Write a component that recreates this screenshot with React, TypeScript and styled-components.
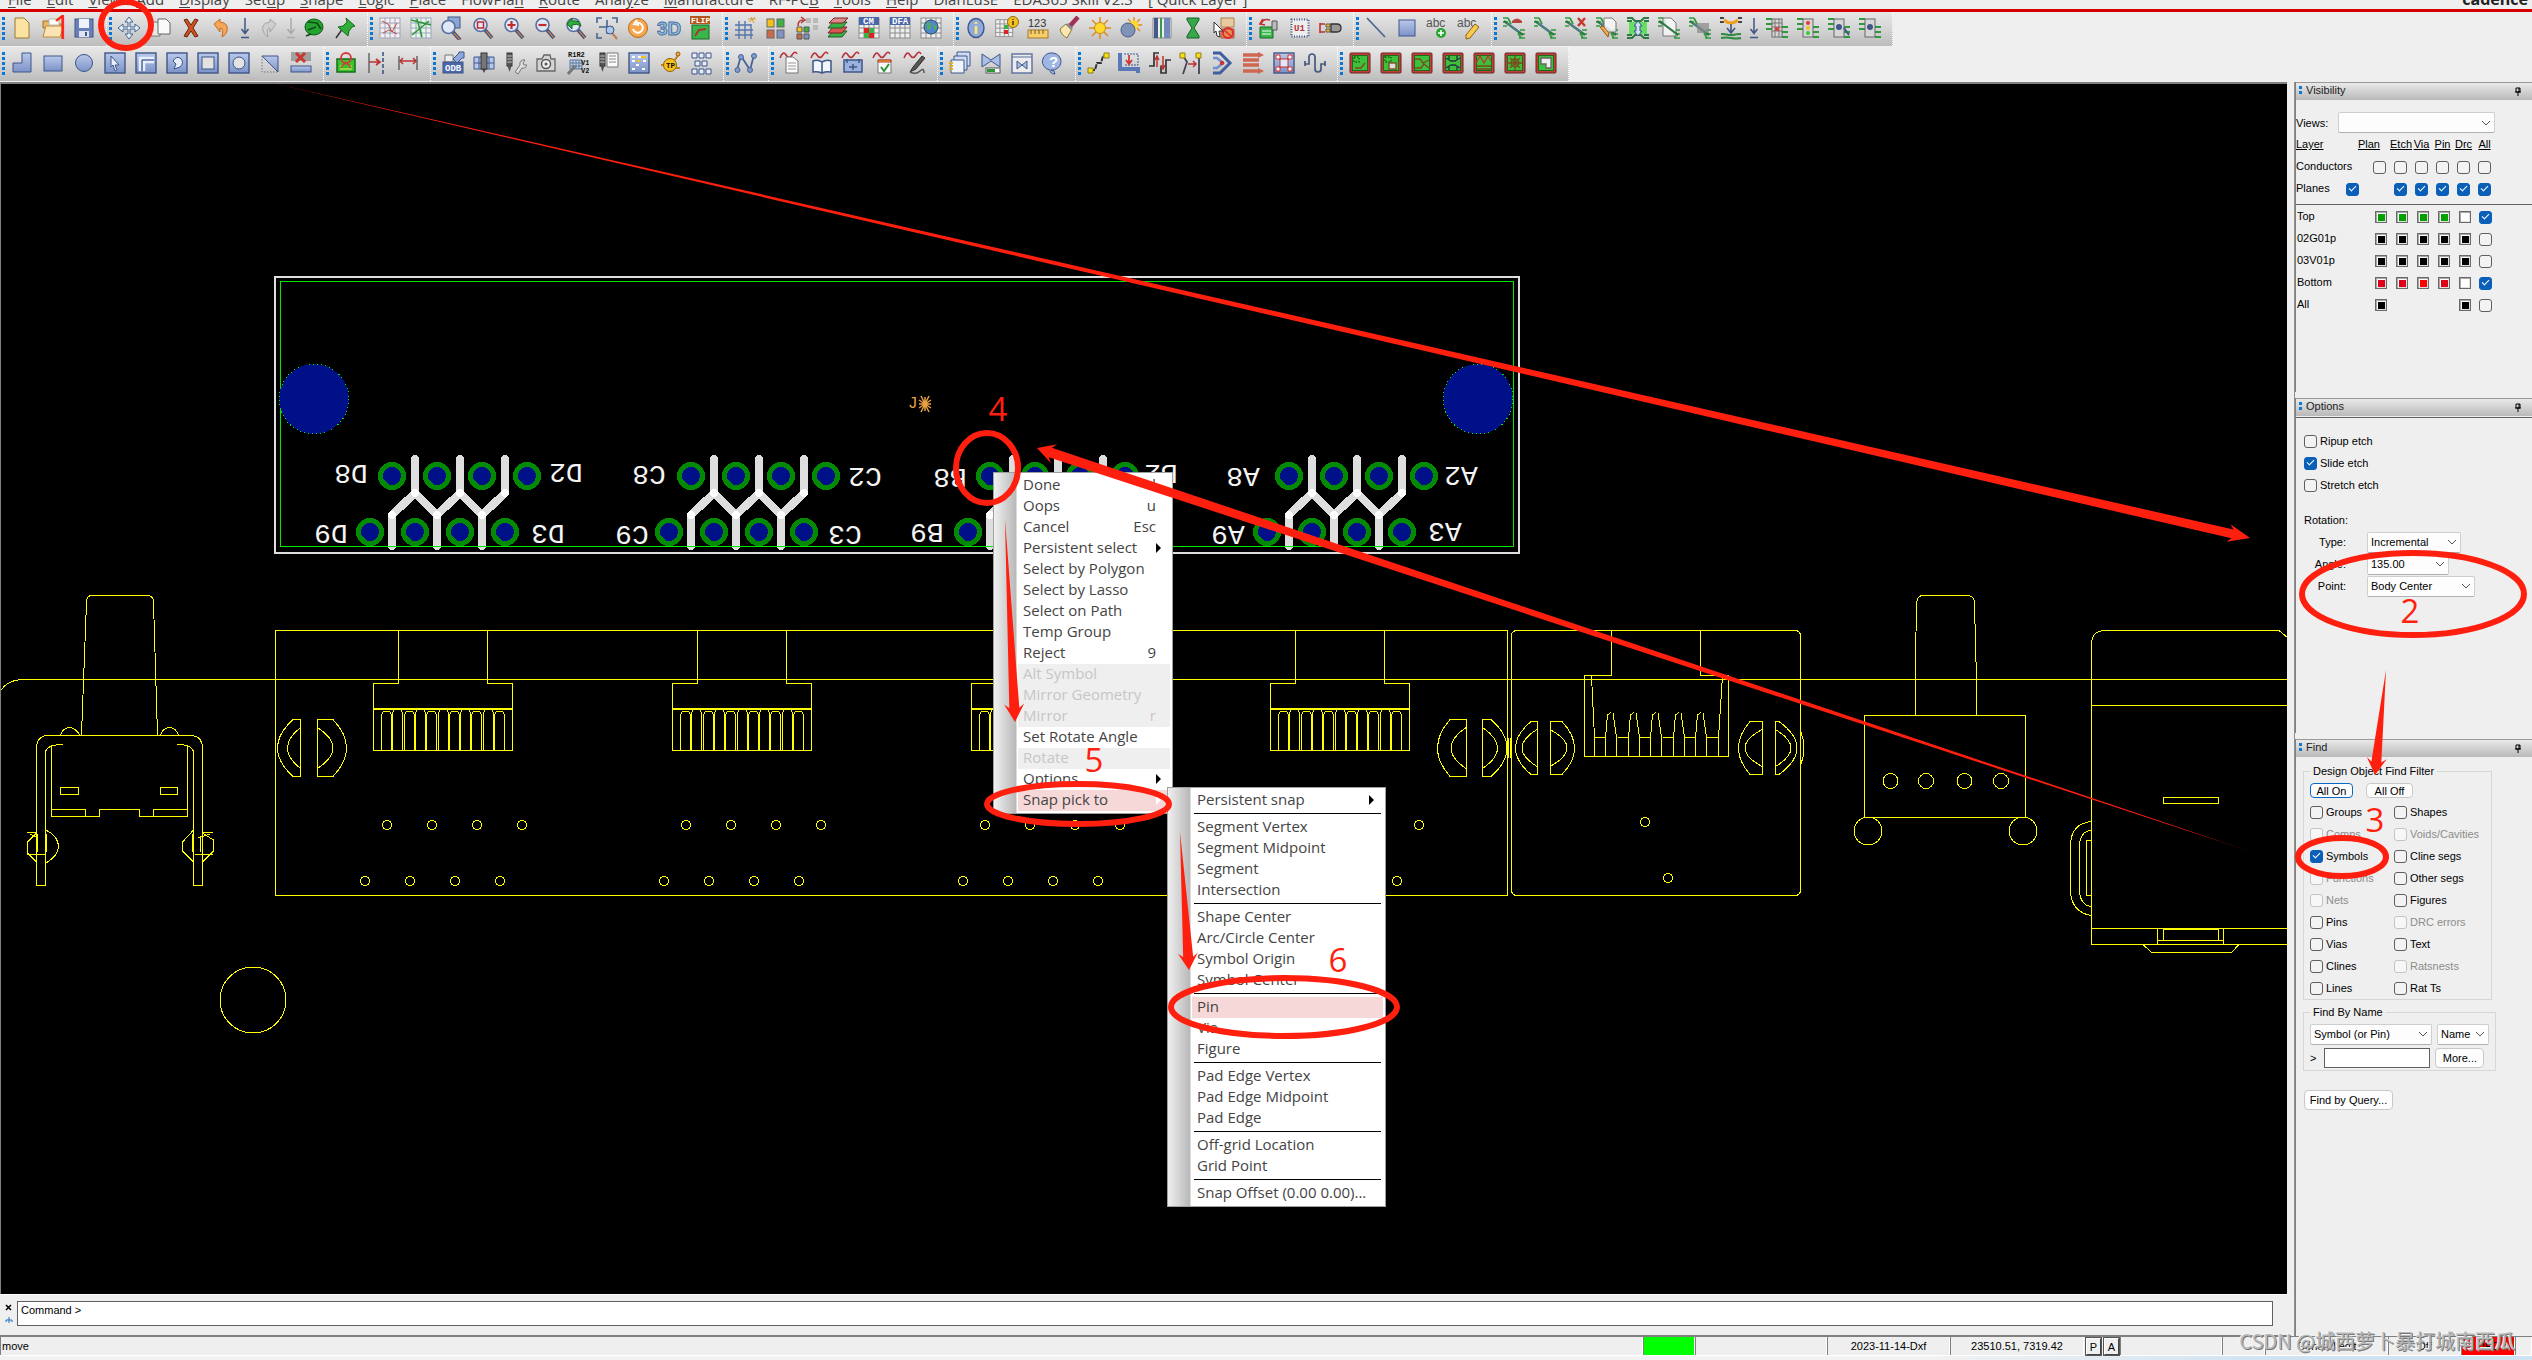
import React, { ReactNode } from "react";
import styled, { createGlobalStyle, css } from "styled-components";

const ui = `"Open Sans", "Noto Sans", sans-serif`;
const plain = `"Liberation Sans", Arial, sans-serif`;
const red = "#ff1f0f";

const GlobalStyle = createGlobalStyle`
  * { box-sizing: border-box; }
  body { margin: 0; background: #efefef; font-family: ${plain}; font-size: 11px; color: #000; }
  button, input, select { font: inherit; color: inherit; margin: 0; }
`;

/* ---------- icons ---------- */

const navy = "#3f5688";
const Sheet = ({ x = 5, y = 2, fill = "#fbe3a4", stroke = "#9a7b2e" }) => (
  <path d={`M${x} ${y}h9l5 5v15h-14z`} fill={fill} stroke={stroke} />
);
const Lens = ({ children }: { children?: ReactNode }) => (
  <g>
    <path d="M14 14l7 8" stroke="#3b4f7d" strokeWidth="3.6" />
    <path d="M15 15l6 7" stroke="#c77a4a" strokeWidth="1.4" />
    <circle cx="9.500" cy="9" r="6.500" fill="#dfe8f8" stroke="#5a6f9f" strokeWidth="1.600" />
    {children}
  </g>
);
const Grid = ({ c = "#8a8a8a", bg = "#eee" }) => (
  <g>
    <rect x="2" y="2" width="20" height="20" fill={bg} stroke={c} />
    <path d="M2 7h20M2 12h20M2 17h20M7 2v20M12 2v20M17 2v20" stroke={c} />
  </g>
);
const Tile = ({ children }: { children?: ReactNode }) => (
  <g>
    <rect x="2" y="2" width="20" height="20" fill="url(#blue)" stroke={navy} strokeWidth="1.400" />
    {children}
  </g>
);
const Board = ({ children }: { children?: ReactNode }) => (
  <g>
    <rect x="2" y="2" width="20" height="20" rx="1" fill="#c2403c" stroke="#6f2020" />
    <rect x="4.500" y="4.500" width="15" height="15" fill="#3fbf3a" stroke="#1c6b1c" />
    <g fill="none" stroke="#7a4a20" strokeWidth="1.300">{children}</g>
  </g>
);
const Wave = ({ children }: { children?: ReactNode }) => (
  <g>
    <path d="M1 7q3-8 6-3t6 0t5-1" fill="none" stroke="#b5303a" strokeWidth="1.500" />
    {children}
  </g>
);
const Net = ({ children }: { children?: ReactNode }) => (
  <g>
    <path d="M1 2h5M1 6h5M1 10h4M18 14h5M18 18h5M17 22h6M6 2l3 6M16 17l3 5" stroke="#2f9a3c" strokeWidth="1.700" />
    <path d="M2 5l19 14" stroke="#2d7a40" strokeWidth="2.200" />
    <path d="M5 7l12 9" stroke="#5d78b0" strokeWidth="1.100" />
    {children}
  </g>
);
const Chip = ({ children }: { children?: ReactNode }) => (
  <g>
    <path d="M1 3h6M1 8h6M1 13h6M17 11h6M17 16h6M17 21h6" stroke="#2f9a3c" strokeWidth="1.900" />
    <rect x="7" y="3" width="10" height="18" fill="#d6d6d6" stroke="#666" />
    {children}
  </g>
);
const DownArrow = ({ c = navy }) => (
  <path d="M6 2v15M2.500 13L6 17.500L9.500 13M2 21.500h8" fill="none" stroke={c} strokeWidth="1.500" />
);
const Bolt = () => (
  <g>
    <rect x="4" y="2" width="5" height="13" fill="#5a5a5a" stroke="#333" />
    <path d="M4 5h5M4 8h5M4 11h5" stroke="#bbb" />
    <path d="M4.500 15l2 6 2-6" fill="#555" />
  </g>
);
const Wrench = () => (
  <path d="M12 21l5-7a4 4 0 0 1 5-5l-2 3 1 2h3a4 4 0 0 1-5 3l-4 6z" fill="#ddd" stroke="#777" />
);

const icons: Record<string, ReactNode> = {
  New: <Sheet />,
  Open: <><path d="M2 5h8l2 3h8v4H2z" fill="#e7b768" stroke="#a66f22" /><path d="M5 10h18l-4 11H2z" fill="#fbe3b4" stroke="#c58a3a" /><path d="M8 3h10v6H8z" fill="#fff" stroke="#b7b7b7" /></>,
  Save: <><rect x="3" y="3" width="18" height="18" fill="#6a7fb8" stroke={navy} /><rect x="7" y="3" width="10" height="9" fill="#eef2fa" /><rect x="7" y="15" width="10" height="6" fill="#dfe4ee" /><rect x="13" y="16" width="2" height="4" fill={navy} /></>,
  Move: <path d="M12 1l4 5h-3v5h5V8l5 4-5 4v-3h-5v5h3l-4 5-4-5h3v-5H6v3l-5-4 5-4v3h5V6H8z" fill="#e6f0fa" stroke="#45668f" />,
  Copy: <><path d="M3 6h9v14H3z" fill="#e8e8e8" stroke="#777" /><path d="M10 3h8l4 4v11H10z" fill="#fafafa" stroke="#666" /></>,
  Delete: <path d="M5 4l3-1 4 6 4-6 3 1-5 8 5 8-3 1-4-6-4 6-3-1 5-8z" fill="#d4511e" stroke="#5a2410" />,
  Undo: <path d="M4 8l6-5v3q9 1 7 9-1 4-5 6 2-9-2-9v4z" fill="#f4a75a" stroke="#c06f24" />,
  Apply: <DownArrow />,
  Redo: <path d="M20 8l-6-5v3q-9 1-7 9 1 4 5 6-2-9 2-9v4z" fill="#cfcfcf" stroke="#a5a5a5" />,
  "Apply redo": <DownArrow c="#aaa" />,
  Globe: <><ellipse cx="12" cy="11" rx="9" ry="8" fill="#24a32f" stroke="#0e5a18" /><path d="M6 6l9 1 4 6M6 14l8-3M4 20l5-2" stroke="#0b4d14" strokeWidth="1.600" fill="none" /></>,
  Pin: <><path d="M10 12L3 22" stroke="#333" strokeWidth="1.500" /><path d="M13 2l9 8-3 1-3 4-1 5-10-9 5-1 4-4z" fill="#2fae39" stroke="#126b1b" /></>,
  Unrats: <><Grid bg="#f6eeee" c="#9aa6bd" /><path d="M4 5l6 3 4 8 5-9M5 17l6-3 8 4" stroke="#b34a4a" fill="none" /></>,
  Rats: <><Grid bg="#eaf6ea" c="#9aa6bd" /><path d="M2 4l20 5M3 19L20 5M8 3l5 18" stroke="#2c9638" strokeWidth="1.600" /></>,
  "Zoom by points": <><rect x="8" y="1" width="12" height="11" fill="#8ea6d6" stroke={navy} /><g transform="translate(-1 2)"><Lens /></g></>,
  "Zoom fit": <Lens><rect x="6.500" y="6" width="6" height="6" fill="none" stroke="#c02a2a" strokeWidth="1.500" /></Lens>,
  "Zoom in": <Lens><path d="M9.500 5v8M5.500 9h8" stroke="#c02a2a" strokeWidth="2.200" /></Lens>,
  "Zoom out": <Lens><path d="M5.500 9h8" stroke="#c02a2a" strokeWidth="2.200" /></Lens>,
  "Zoom previous": <Lens><path d="M3 8l5-6v3q8-1 9 5-4-3-9-1v4z" fill="#2fae39" stroke="#126b1b" /></Lens>,
  "Zoom selection": <><path d="M2 7V2h5M17 2h5v5M2 17v5h5M12 4v14M4 11h14" fill="none" stroke="#45668f" strokeWidth="1.600" /><path d="M17 17l5 6" stroke="#c77a4a" strokeWidth="2" /><circle cx="15" cy="14" r="4" fill="#a9c8ea" stroke={navy} /></>,
  Redraw: <><circle cx="12" cy="12" r="9.500" fill="#f6a64c" stroke="#b56a1c" /><path d="M7 13a5 5 0 1 0 3-6M11 4L8 8l5 1" fill="none" stroke="#fff" strokeWidth="2" /></>,
  "3D": <text x="0" y="19" fontFamily="Liberation Sans" fontWeight="700" fontSize="19" fill="#9cc3e6" stroke="#47719f">3D</text>,
  Flip: <><rect x="2" y="0" width="20" height="8" fill="#b5561a" /><text x="3" y="7" fontFamily="Liberation Mono" fontWeight="700" fontSize="8" fill="#fff">FLIP</text><rect x="4" y="9" width="17" height="14" fill="#39b54a" stroke="#176b20" /><path d="M7 20l4-6 7-1" stroke="#a33" strokeWidth="2" fill="none" /></>,
  "Grid toggle": <><path d="M6 5v18M12 5v18M18 8v15M2 9h16M2 14h18M2 19h18" stroke="#5577aa" strokeWidth="1.400" /><path d="M16 6l6-5M18 1l3 6M15 3h8" stroke="#d79a3a" /></>,
  Color: <><rect x="3" y="3" width="7" height="8" fill="#f6c21a" stroke="#666" /><rect x="13" y="3" width="7" height="8" fill="#3bb044" stroke="#666" /><rect x="3" y="14" width="7" height="8" fill="#c96a4a" stroke="#666" /><rect x="13" y="14" width="7" height="8" fill="#7f93c4" stroke="#666" /></>,
  "Color swap": <><path d="M11 2h5v5h-5zM18 2h5v5h-5zM18 9h5v5h-5z" fill="#b9b9b9" /><path d="M3 10q0-6 5-6M6 1l4 3-4 3" stroke="#b33" fill="none" strokeWidth="1.500" /><path d="M2 11h5v5H2z" fill="#f6c21a" stroke="#555" /><path d="M9 11h5v5H9z" fill="#3bb044" stroke="#555" /><path d="M2 18h5v5H2z" fill="#c96a4a" stroke="#555" /><path d="M9 18h5v5H9z" fill="#7f93c4" stroke="#555" /></>,
  Layers: <><path d="M7 15h14l-5 6H2z" fill="#3bb044" stroke="#1c5d22" /><path d="M7 11h14l-5 6H2z" fill="#d55" stroke="#722" /><path d="M7 6h14l-5 6H2z" fill="#3bb044" stroke="#1c5d22" /><path d="M8 2h14l-5 5H3z" fill="#d88" stroke="#722" /></>,
  "Constraint manager": <><Grid /><rect x="2" y="1" width="20" height="8" fill="#4a68a8" /><text x="6" y="8" fontFamily="Liberation Mono" fontWeight="700" fontSize="9" fill="#fff">CM</text><path d="M7 12h5v5H7zM12 17h5v5h-5z" fill="#d22" /><path d="M12 12h5v5h-5zM7 17h5v5H7z" fill="#3bb044" /></>,
  DFA: <><Grid /><rect x="2" y="1" width="20" height="8" fill="#4a68a8" /><text x="4" y="8" fontFamily="Liberation Mono" fontWeight="700" fontSize="9" fill="#fff">DFA</text></>,
  World: <><Grid /><circle cx="12" cy="11" r="7" fill="#4f87c7" stroke="#24486f" /><path d="M8 6q4 0 4 4t-4 3zM14 9l4 1-2 5z" fill="#4fae55" /></>,
  Info: <><ellipse cx="12" cy="12" rx="8" ry="9.500" fill="#8fa9dc" stroke={navy} strokeWidth="1.400" /><path d="M12 6v2M12 10v8" stroke="#ffe96a" strokeWidth="2.600" /></>,
  "Data info": <><g transform="translate(-1 2) scale(.85)"><Grid /></g><path d="M9 9h4v4H9z" fill="#3bb044" /><path d="M9 14h4v4H9z" fill="#d22" /><circle cx="18" cy="6" r="5.500" fill="#f6c21a" stroke="#8f6d10" /><path d="M18 3v1M18 5v4" stroke="#333" strokeWidth="1.500" /></>,
  Measure: <><text x="2" y="11" fontFamily="Liberation Sans" fontSize="11" fill="#333">123</text><rect x="2" y="14" width="20" height="8" fill="#f6cf6a" stroke="#a5792a" /><path d="M5 14v4M9 14v4M13 14v4M17 14v4" stroke="#76541a" /></>,
  Brush: <><path d="M21 1l-8 9" stroke="#a22f57" strokeWidth="4.500" /><path d="M9 8l6 5-5 9q-6-3-7-9z" fill="#f8e8b0" stroke="#8f763c" /><path d="M10 8l5 5" stroke="#8a8a8a" strokeWidth="3" /></>,
  Sun: <><path d="M12 1v22M1 12h22M4 4l16 16M20 4L4 20" stroke="#e08a1a" strokeWidth="1.500" /><circle cx="12" cy="12" r="5.500" fill="#ffd92e" stroke="#c98a12" /></>,
  Shadow: <><path d="M15 1v6M15 9h8M21 3l-6 6M9 3l6 6M21 15l-6-6" stroke="#e08a1a" strokeWidth="1.400" /><circle cx="15" cy="9" r="4.500" fill="#ffd92e" /><circle cx="9" cy="14" r="7" fill="#7f93b8" stroke="#4b5c80" /></>,
  Stripes: <><path d="M3 2h18v20H3z" fill="#eee" stroke="#888" /><path d="M6 2v20" stroke="#445a8a" strokeWidth="4" /><path d="M11 2v20" stroke="#3a9a4a" strokeWidth="2" /><path d="M17 2v20" stroke="#7489bb" strokeWidth="6" /></>,
  Hourglass: <path d="M6 2h12v2l-5 8 5 8v2H6v-2l5-8-5-8z" fill="#35a84a" stroke="#155f22" />,
  "Waive DRC": <><path d="M9 2h13v9H9z" fill="#e8c9a0" stroke="#a9814c" /><path d="M9 13h13v9H9z" fill="#e58c50" stroke="#a9544c" /><circle cx="16" cy="17" r="5" fill="none" stroke="#e02a2a" strokeWidth="1.800" /><path d="M12 14l8 7" stroke="#e02a2a" strokeWidth="1.500" /><path d="M2 6l9 9H7l1 6-3-1-1-5-2 2z" fill="#fff" stroke="#333" /></>,
  "Place part": <><path d="M3 11h13v11H3z" fill="#39b54a" stroke="#176b20" /><path d="M5 15h9M5 18h9" stroke="#fff" /><path d="M15 5h5v9h-5z" fill="#bbb" stroke="#555" /><path d="M4 8q2-6 9-4M6 3L3 8l5 1" stroke="#b33" strokeWidth="1.700" fill="none" /></>,
  "Component U1": <><rect x="3.500" y="3.500" width="17" height="17" fill="#eee" stroke={navy} strokeWidth="2" strokeDasharray="1 1.500" /><text x="6" y="15" fontFamily="Liberation Mono" fontWeight="700" fontSize="9" fill="#b5303a">U1</text></>,
  Connector: <><path d="M1 7v10M1 8h5M1 16h5" stroke="#b33" strokeWidth="1.600" /><path d="M7 8h4v3H7zM7 13h4v3H7z" fill="#f6c21a" stroke="#555" /><path d="M12 8h6q4 0 4 4t-4 4h-6z" fill="#999" stroke="#333" strokeWidth="1.300" /></>,
  Line: <path d="M3 2l18 19" stroke="#4f6690" strokeWidth="1.800" />,
  Rectangle: <rect x="4" y="4" width="16" height="16" fill="url(#blue)" stroke={navy} />,
  "Add text": <><text x="0" y="11" fontFamily="Liberation Sans" fontSize="12" fill="#555">abc</text><circle cx="15" cy="17" r="5" fill="#25a52f" /><path d="M15 14v6M12 17h6" stroke="#fff" strokeWidth="1.600" /></>,
  "Edit text": <><text x="0" y="11" fontFamily="Liberation Sans" fontSize="12" fill="#555">abc</text><path d="M18 8l4 3-9 11-4 1 0-4z" fill="#f8cb4a" stroke="#8a5e1c" /></>,
  "Net cap": <Net><path d="M10 5q5-5 10 0v2H10z" fill="#b5463f" /></Net>,
  "Net plain": <Net />,
  "Net delete": <Net><path d="M14 2l7 8M21 2l-7 8" stroke="#c8382f" strokeWidth="2.500" /></Net>,
  "Net edit": <Net><path d="M9 2h8l4 4v10H9z" fill="#fafafa" fillOpacity=".8" stroke="#777" /><path d="M5 11l8 10 1-4-6-7z" fill="#f6a64c" stroke="#8a5e1c" /></Net>,
  "Net span": <><rect x="3" y="6" width="18" height="12" fill="#63e063" /><path d="M1 2h5l3 3h6l3-3h5M1 22h5l3-3h6l3 3h5M1 5h5M18 5h5M1 19h5M18 19h5" stroke="#2d7a40" strokeWidth="2" fill="none" /><path d="M12 5l4 5h-2v5h2l-4 5-4-5h2v-5H8z" fill="#cfe0f7" stroke={navy} /></>,
  "Net report": <Net><path d="M6 2h8l5 5v13H6z" fill="#fafafa" fillOpacity=".8" stroke="#777" /><path d="M4 6l17 13" stroke="#2d7a40" strokeWidth="2" /></Net>,
  "Net copy": <Net><path d="M9 7h12v10H9z" fill="#888" fillOpacity=".7" /></Net>,
  "Net swap": <><path d="M1 2h4M19 2h4M1 6h4M19 6h4" stroke="#444" strokeWidth="2" /><path d="M5 4q7 6 14 0" stroke="#f0a020" strokeWidth="3" fill="none" /><path d="M12 8v8M8 12l4 5 4-5" stroke={navy} strokeWidth="1.600" fill="none" /><path d="M2 18q5 0 8 1h4q3-1 8-1M2 22q5-1 10 0t10 0" stroke="#2d8a40" strokeWidth="2" fill="none" /></>,
  "Net down": <DownArrow />,
  "Chip grid": <Chip><path d="M7 7h10M7 11h10M7 15h10M10 3v18M14 3v18" stroke="#777" /><path d="M10 11h4v4h-4z" fill="#d44" /></Chip>,
  "Chip light": <Chip><circle cx="12" cy="7" r="2" fill="#e33" /><circle cx="12" cy="12" r="2" fill="#f3c21a" /><circle cx="12" cy="17" r="2" fill="#3c3" /></Chip>,
  "Chip port": <Chip><circle cx="12" cy="11" r="3" fill={navy} /><path d="M17 12l5 7" stroke={navy} strokeWidth="2" /></Chip>,
  "Chip port 2": <Chip><circle cx="12" cy="11" r="3" fill={navy} /></Chip>,
  "Shape polygon": <path d="M12 2h9v19H3v-9h9z" fill="url(#blue)" stroke={navy} />,
  "Shape rect": <rect x="3" y="5" width="18" height="15" fill="url(#blue)" stroke={navy} />,
  "Shape circle": <circle cx="12" cy="12" r="8.500" fill="url(#blue)" stroke={navy} />,
  "Shape select": <Tile><path d="M8 5l8 9h-4l2 5-2 1-2-6-2 2z" fill="#e8eefa" stroke={navy} /></Tile>,
  "Shape void": <Tile><path d="M6 20v-13h14M10 20v-9h10" stroke="#e8eefa" strokeWidth="2.500" fill="none" /><path d="M8 20V9h12" stroke={navy} fill="none" /></Tile>,
  "Void polygon": <Tile><path d="M9 18l2-5-3-3q3-5 7-3 5 4 0 9z" fill="#e8eefa" stroke={navy} /></Tile>,
  "Void rect": <Tile><rect x="6" y="6" width="12" height="12" fill="#e2e2e2" stroke={navy} /></Tile>,
  "Void circle": <Tile><circle cx="12" cy="12" r="6" fill="#e2e2e2" stroke={navy} /></Tile>,
  "Void corner": <><path d="M4 5h16v16z" fill="url(#blue)" stroke={navy} /><path d="M4 5v16h16" fill="none" stroke="#777" strokeDasharray="1.500 1.500" /></>,
  "Island delete": <><rect x="2" y="1" width="20" height="9" fill="#888" fillOpacity=".7" /><path d="M7 2l9 9M16 2l-9 9" stroke="#c8382f" strokeWidth="3" /><rect x="2" y="15" width="20" height="6" fill="url(#blue)" stroke={navy} /></>,
  "Board symbol": <><path d="M3 8h18v13H3z" fill="#39c52a" stroke="#176b20" strokeWidth="1.500" /><path d="M6 18h12M6 15h3M15 15h3" stroke="#f0e85a" /><circle cx="12" cy="7" r="5" fill="none" stroke="#d43a3a" strokeWidth="1.800" /><path d="M8 17v-2q4-5 8 0v2" stroke="#d43a3a" fill="none" strokeWidth="1.400" /></>,
  "Spacing line": <><path d="M4 2v20" stroke="#555" strokeWidth="1.300" /><path d="M18 1v22" stroke={navy} strokeWidth="1.600" strokeDasharray="4 2" /><path d="M4 11h11M11 8l4 3-4 3" stroke="#b33" strokeWidth="1.700" fill="none" /></>,
  Dimension: <><path d="M3 5v14M21 5v14" stroke="#555" strokeWidth="1.300" /><path d="M4 10h16M7 7l-3 3 3 3M17 7l3 3-3 3" stroke="#b33" strokeWidth="1.500" fill="none" /></>,
  ODB: <><path d="M4 4h8v7H4z" fill="#eee" stroke="#777" /><rect x="2" y="11" width="20" height="11" fill="#4a68a8" stroke={navy} /><text x="4" y="20" fontFamily="Liberation Mono" fontWeight="700" fontSize="9" fill="#fff">ODB</text><path d="M12 8l6-6v-1h5v6h-2l-5 5z" fill="#8fa9dc" stroke={navy} /></>,
  "Drill table": <><path d="M2 6h20v12H2zM2 12h20M7 6v12M17 6v12" stroke={navy} fill="#b7c7ea" /><rect x="9" y="2" width="6" height="16" fill="#777" stroke="#333" /><path d="M10 18l2 4 2-4" fill="#444" /></>,
  "Drill customize": <><Bolt /><Wrench /></>,
  Snapshot: <><path d="M3 8h5l2-4h6l1 4h4v12H3z" fill="#d4d4d4" stroke="#666" strokeWidth="1.300" /><circle cx="12" cy="13" r="4.500" fill="#eee" stroke="#555" strokeWidth="1.500" /><circle cx="12" cy="13" r="1.500" fill="#555" /></>,
  "Rename refs": <><path d="M5 9h12v9H5zM8 9v9M11 9v9M14 9v9M5 12h12M5 15h12" stroke="#5577aa" fill="none" /><path d="M3 23l7-8" stroke="#777" strokeWidth="3" /><text x="3" y="6" fontFamily="Liberation Mono" fontWeight="700" fontSize="7" fill="#111">R1R2</text><text x="16" y="14" fontFamily="Liberation Mono" fontWeight="700" fontSize="7" fill="#111">V1</text><text x="16" y="22" fontFamily="Liberation Mono" fontWeight="700" fontSize="7" fill="#111">V2</text></>,
  "Drill legend": <><Bolt /><path d="M11 2h11v14H11z" fill="#fafafa" stroke="#777" /><path d="M13 5h7M13 8h7M13 11h7" stroke="#888" /></>,
  "Film control": <Tile><path d="M5 6h3M11 6h3M5 10h3M16 10h3M9 14h3M15 18h3M5 18h3" stroke="#fff" strokeWidth="2" /><path d="M14 6h5M10 10h3" stroke="#f6c21a" strokeWidth="2" /></Tile>,
  Testprep: <><path d="M3 14h5M16 10l5-7M16 17h6" stroke="#c98212" strokeWidth="2" /><circle cx="12" cy="14" r="6.500" fill="#f6c21a" stroke="#8f5d10" /><circle cx="20" cy="3" r="2" fill="#f6a64c" stroke="#8f5d10" /><text x="8" y="17" fontFamily="Liberation Mono" fontWeight="700" fontSize="7.500" fill="#111">TP</text></>,
  "Auto place": <path d="M3 2h5v5H3zM10 2h5v5h-5zM17 2h5v5h-5zM6 10h5v5H6zM13 10h5v5h-5zM3 18h5v5H3zM10 18h5v5h-5zM17 18h5v5h-5z" fill="#e6ecf8" stroke={navy} />,
  Topology: <><path d="M3 19L7 5l9 14 4-15" fill="none" stroke="#4a6496" strokeWidth="1.800" /><g fill="#7f9acb" stroke="#4a6496"><circle cx="3.500" cy="19" r="2.500" /><circle cx="7" cy="6" r="2.500" /><circle cx="16" cy="19" r="2.500" /><circle cx="20" cy="5" r="2.500" /></g></>,
  "Signal report": <Wave><path d="M7 6h7l5 4v12H7z" fill="#fafafa" stroke="#777" /><path d="M9 12h8M9 15h8M9 18h8" stroke="#999" /></Wave>,
  "Signal library": <Wave><path d="M3 10q5-2 9 1 5-3 9-1v11q-5-1-9 1-5-2-9-1zM12 11v11" fill="#f1f5fc" stroke={navy} strokeWidth="1.500" /></Wave>,
  "Signal model": <Wave><path d="M3 9h18v12H3z" fill="#9bb1dd" stroke={navy} strokeWidth="1.500" /><path d="M6 8v4M18 8v4M8 16h8M12 13v6" stroke={navy} strokeWidth="1.500" /></Wave>,
  "Signal audit": <Wave><path d="M6 9h13v13H6z" fill="#fafafa" stroke="#777" /><path d="M6 9h13v2H6z" fill="#f6c21a" stroke="#b33" /><path d="M9 16l3 4 5-7" stroke="#2c9638" strokeWidth="2" fill="none" /></Wave>,
  "Signal probe": <Wave><path d="M19 5l-9 11-3 5 6-3 9-11z" fill="#555" stroke="#333" /><path d="M7 21q6 3 10-1t4 2" fill="none" stroke="#555" strokeWidth="1.500" /></Wave>,
  "Window cascade": <g fill="#cfdcf4" stroke={navy}><path d="M9 1h13v14H9z" /><path d="M6 5h13v14H6z" /><path d="M3 9h13v13H3z" fill="#eef3fc" /><path d="M1 12h4M1 15h4M1 18h4" stroke="#e0b020" strokeWidth="2" /></g>,
  "Bowtie run": <><path d="M3 3l9 6 9-6v13l-9-6-9 6z" fill="#a9bfe8" stroke={navy} /><rect x="7" y="17" width="14" height="5" fill="#fff" stroke="#555" /><path d="M8 19.500h8" stroke="#2c9638" strokeWidth="3" /></>,
  "Bowtie window": <><rect x="2" y="3" width="20" height="19" fill="#ececec" stroke="#5a6f9f" strokeWidth="1.400" /><path d="M2 6h20" stroke="#5a6f9f" /><path d="M7 10l5 4 5-4v8l-5-4-5 4z" fill="#a9bfe8" stroke={navy} /></>,
  Help: <><path d="M12 2a9 8.500 0 1 1-2 17q4 0 4 4-5 0-5-4a9 8.500 0 0 1 3-17z" fill="#9fb6e4" stroke={navy} /><text x="8" y="16" fontFamily="Liberation Sans" fontWeight="700" fontSize="15" fill="#fff">?</text></>,
  "Route connect": <><path d="M4 19h5l2-7h4l2-7h4" stroke="#333" strokeWidth="2" fill="none" strokeDasharray="5 1" /><path d="M2 17h5v5H2zM18 2h5v5h-5z" fill="#f6e21a" stroke="#8f7d10" /></>,
  "Route offset": <><path d="M3 2v16h18v4" fill="none" stroke="#5a78b8" strokeWidth="4" /><path d="M7 3h14v11H7" fill="none" stroke={navy} strokeDasharray="2 1" /><path d="M12 4v8M9 9l3 4 3-4" stroke="#c33" fill="none" strokeWidth="1.700" /></>,
  "Route slide": <><path d="M1 15h5V2h5M13 15v7h5V9h5" stroke="#333" strokeWidth="1.700" fill="none" /><path d="M9 16V6M7 9l2-4 2 4M15 5v12M13 14l2 4 2-4" stroke="#b33" strokeWidth="1.500" fill="none" /></>,
  "Route spread": <><path d="M4 5l4 6-4 12M20 5v18" stroke="#445" strokeWidth="1.800" fill="none" /><path d="M1 2h5v5H1zM17 2h5v5h-5z" fill="#f6e21a" stroke="#8f7d10" /><path d="M9 13h8M14 10l3 3-3 3" stroke="#b33" fill="none" strokeWidth="1.500" /></>,
  "Route corner": <><path d="M3 2h7l10 10-10 10H3" fill="none" stroke="#3f5f9f" strokeWidth="3" /><path d="M3 7h4l6 5-6 5H3" fill="none" stroke="#6f8fcf" strokeWidth="2.500" /><circle cx="12" cy="12" r="2.200" fill="#c33" /></>,
  "Route bus": <><path d="M2 4h16M2 9h16M2 14h16M2 20h16" stroke="#cf6650" strokeWidth="3.500" /><path d="M17 1l6 3-6 3zM17 17l6 3-6 3z" fill="#cf6650" /></>,
  "Route spider": <Tile><path d="M4 4l16 16M20 4L4 20" stroke="#e33" strokeWidth="2" /><rect x="8" y="8" width="8" height="8" fill="#dfe8fa" stroke="#c33" /><path d="M4 4h4v4H4zM16 4h4v4h-4zM4 16h4v4H4zM16 16h4v4h-4z" fill="#fff" stroke="#c33" /></Tile>,
  "Route tune": <path d="M2 13h4V6q0-3 3-3t3 3v12q0 3 3 3t3-3V13h4M2 10v5M22 10v5" fill="none" stroke="#47597d" strokeWidth="1.700" />,
  "Board a": <Board><path d="M6 6h5v5H6z" strokeDasharray="1.500 1.500" stroke="#125c12" /><path d="M7 17h6l4-5" /></Board>,
  "Board b": <Board><path d="M6 6h6v5H6z" strokeDasharray="1.500 1.500" stroke="#125c12" /><rect x="10" y="12" width="7" height="6" fill="#ddd" /></Board>,
  "Board c": <Board><path d="M5 8h5l3 4 6-3M5 17h6l3-4 5 4" /></Board>,
  "Board d": <Board><path d="M5 7l5 3h4l5-3M5 17l5-3h4l5 3M8 5v4M16 5v4M8 19v-4M16 19v-4" stroke="#234" /></Board>,
  "Board e": <Board><path d="M4 12l4-7 4 7 4-7 3 5" stroke="#b33" /><path d="M5 15h14M5 18h14" /></Board>,
  "Board f": <Board><path d="M5 12h14M12 5v14M7 7l10 10M17 7L7 17" /><circle cx="12" cy="12" r="4" /></Board>,
  "Board g": <Board><path d="M7 7h10v10h-5v-4H7z" fill="#eee" stroke="#666" /></Board>,
};

const slim = new Set(["Apply", "Apply redo", "Net down"]);

const rowOne = [
  ["New", "Open", "Save"],
  ["Move", "Copy", "Delete", "Undo", "Apply", "Redo", "Apply redo", "Globe", "Pin"],
  ["Unrats", "Rats", "Zoom by points", "Zoom fit", "Zoom in", "Zoom out", "Zoom previous", "Zoom selection", "Redraw", "3D", "Flip"],
  ["Grid toggle", "Color", "Color swap", "Layers", "Constraint manager", "DFA", "World"],
  ["Info", "Data info", "Measure", "Brush", "Sun", "Shadow", "Stripes", "Hourglass", "Waive DRC"],
  ["Place part", "Component U1", "Connector"],
  ["Line", "Rectangle", "Add text", "Edit text"],
  ["Net cap", "Net plain", "Net delete", "Net edit", "Net span", "Net report", "Net copy", "Net swap", "Net down", "Chip grid", "Chip light", "Chip port", "Chip port 2"],
];
const rowTwo = [
  ["Shape polygon", "Shape rect", "Shape circle", "Shape select", "Shape void", "Void polygon", "Void rect", "Void circle", "Void corner", "Island delete"],
  ["Board symbol", "Spacing line", "Dimension"],
  ["ODB", "Drill table", "Drill customize", "Snapshot", "Rename refs", "Drill legend", "Film control", "Testprep", "Auto place"],
  ["Topology"],
  ["Signal report", "Signal library", "Signal model", "Signal audit", "Signal probe"],
  ["Window cascade", "Bowtie run", "Bowtie window", "Help"],
  ["Route connect", "Route offset", "Route slide", "Route spread", "Route corner", "Route bus", "Route spider", "Route tune"],
  ["Board a", "Board b", "Board c", "Board d", "Board e", "Board f", "Board g"],
];

/* ---------- header ---------- */

const Page = styled.div`
  position: relative;
  display: flex;
  flex-direction: column;
  min-height: 100vh;
  overflow: hidden;
`;
const Header = styled.header`
  flex: none;
`;
const MenuBar = styled.nav`
  display: flex;
  align-items: flex-end;
  gap: 15px;
  height: 12px;
  padding: 0 4px 0 8px;
  overflow: hidden;
  border-bottom: 3px solid #d40000;
`;
const MenuButton = styled.button`
  flex: none;
  padding: 0;
  border: 0;
  background: none;
  font-family: ${ui};
  font-size: 15px;
  line-height: 20px;
  color: #444;
  u { text-underline-offset: 2px; }
`;
const Brand = styled.span`
  margin-left: auto;
  font-family: ${ui};
  font-weight: 700;
  font-size: 16px;
  line-height: 20px;
  color: #222;
`;
const ToolRow = styled.div`
  display: flex;
  height: 35px;
`;
const ToolGroup = styled.div.attrs({ role: "toolbar" })`
  display: flex;
  align-items: center;
  height: 34px;
  padding: 0 7px 0 2px;
  background: linear-gradient(#e8e8e8, #d2d2d2 55%, #bcbcbc);
  border-right: 1px dotted #fff;
`;
const Grip = styled.span`
  width: 3px;
  height: 24px;
  margin-right: 1px;
  background: repeating-linear-gradient(#0a78d6 0 3px, transparent 3px 5px);
`;
const ToolButton = styled.button<{ $slim?: boolean }>`
  display: grid;
  place-items: center;
  width: ${(p) => (p.$slim ? 15 : 31)}px;
  height: 30px;
  padding: 0 0 2px;
  border: 0;
  background: none;
`;

const Toolbar = ({ groups }: { groups: string[][] }) => (
  <ToolRow>
    {groups.map((group) => (
      <ToolGroup key={group[0]}>
        <Grip />
        {group.map((name) => {
          const thin = slim.has(name);
          return (
            <ToolButton key={name} aria-label={name} $slim={thin}>
              <svg width={thin ? 12 : 24} height="24" viewBox={thin ? "0 0 12 24" : "0 0 24 24"} fill="none">
                {icons[name]}
              </svg>
            </ToolButton>
          );
        })}
      </ToolGroup>
    ))}
  </ToolRow>
);

/* name, index of the underlined mnemonic */
const menus: [string, number][] = [
  ["File", 0], ["Edit", 0], ["View", 0], ["Add", 0], ["Display", 0], ["Setup", 3], ["Shape", 0], ["Logic", 0],
  ["Place", 0], ["FlowPlan", 7], ["Route", 0], ["Analyze", 4], ["Manufacture", 0], ["RF-PCB", 5], ["Tools", 0],
  ["Help", 0], ["DianLusE", -1], ["EDA365 Skill V2.3", -1], ["[ Quick Layer ]", -1],
];

/* ---------- drawing area ---------- */

const Body = styled.div`
  flex: 1;
  display: flex;
  min-height: 0;
`;
const Work = styled.main`
  flex: 1;
  min-width: 0;
  display: flex;
  flex-direction: column;
`;
const Stage = styled.div`
  flex: 1;
  display: flex;
  min-height: 0;
  margin-right: 7px;
  background: #000;
  border-top: 2px solid #808080;
  border-left: 1px solid #808080;
  svg { flex: 1; width: 100%; height: 100%; min-height: 0; }
`;

const PITCH = 299;
const Footprint = ({ dx }: { dx: number }) => (
  <g transform={`translate(${dx} 0)`}>
    <path
      d="M415 459V493M460 459V493M505 459V493M392 515V546M437 515V546M482 515V546M392 515L415 493L437 515L460 493L482 515L505 493"
      stroke="#dedede" strokeWidth="8" strokeLinecap="round" fill="none"
    />
    {[415, 460, 505].map((x) => <circle key={x} cx={x} cy="493" r="4" fill="#fff" />)}
    {[392, 437, 482].map((x) => <circle key={x} cx={x} cy="515" r="4" fill="#fff" />)}
    {[[392, 476], [437, 476], [482, 476], [527, 476], [370, 532], [415, 532], [460, 532], [505, 532]].map(([x, y]) => (
      <g key={`${x}-${y}`}>
        <circle cx={x} cy={y} r="11.500" fill="#001088" stroke="#028a02" strokeWidth="5" />
        <path d={`M${x - 9} ${y + 2}l6 7-5-2z`} fill="#028a02" />
      </g>
    ))}
  </g>
);
const Socket = ({ dx }: { dx: number }) => (
  <g transform={`translate(${dx} 0)`}>
    <path d="M398.500 630.500V683.500H373.500V750.500H512.500V683.500H487.500V630.500M373.500 708.500H512.500M373.500 709.500H512.500" />
    {Array.from({ length: 11 }, (_, i) => {
      const x = 381.5 + Math.round(i * 11.3);
      const y = i % 2 ? 709.5 : 711.5;
      return <path key={i} d={`M${x} 750V${y + 7}Q${x} ${y} ${x + 3} ${y}H${x + 7}Q${x + 10} ${y} ${x + 10} ${y + 7}V750`} />;
    })}
    {[[387, 825], [432, 825], [477, 825], [522, 825], [365, 881], [410, 881], [455, 881], [500, 881]].map(([x, y]) => (
      <circle key={`${x}-${y}`} cx={x} cy={y} r="4.500" />
    ))}
  </g>
);
/* x: flat edge, cap: end of the flat top, far: outer bulge, near: inner bulge */
const Moon = ({ x, cap, far, near, top = 719.5, bottom = 776.5 }: { x: number; cap: number; far: number; near: number; top?: number; bottom?: number }) => {
  const mid = (top + bottom) / 2;
  const o = 2 * far - cap;
  const n = 2 * near - x;
  return (
    <path d={`M${cap} ${top}H${x}V${bottom}H${cap}Q${o} ${mid} ${cap} ${top}M${x} ${top + 8}Q${n} ${mid} ${x} ${bottom - 8}`} />
  );
};
const tooth = [1606, 1629, 1651, 1674, 1696];

const labels: [string, number, number][] = [
  ["D8", 351, 474], ["D2", 566, 473], ["D9", 331, 534], ["D3", 548, 534],
  ["C8", 649, 475], ["C2", 865, 477], ["C9", 632, 535], ["C3", 845, 535],
  ["B8", 950, 478], ["B9", 927, 533], ["B2", 1161, 474],
  ["A8", 1243, 477], ["A2", 1461, 476], ["A9", 1228, 535], ["A3", 1445, 532],
];

const Drawing = () => (
  <svg viewBox="1 84 2286 1210" preserveAspectRatio="xMinYMin slice" role="img" aria-label="Board layout">
    <g fill="none" shapeRendering="crispEdges">
      {[0, 1, 2, 3].map((i) => <Footprint key={i} dx={i * PITCH} />)}
      <rect x="275" y="277" width="1244" height="276" stroke="#dedede" strokeWidth="2" />
      <rect x="280.500" y="281.500" width="1233" height="265" stroke="#00e800" />
      {[314, 1478].map((x) => (
        <circle key={x} cx={x} cy="399" r="35" fill="#001088" stroke="#00e800" strokeDasharray="1 3" />
      ))}
      <g stroke="#ffff00">
        <path d="M1 690Q8 680 22 679.500H2287" />
        <path d="M81.500 735L86.500 602Q87 595.500 92 595.500H148Q153.500 596 153.500 602L157.500 735" />
        <path d="M60.500 735Q63 727.500 70 727.500Q75 728 80 735M160.500 735Q163 727.500 170 727.500Q176 728 178.500 735" />
        <path d="M36.500 885.500V748Q37 735.500 48 735.500H192Q202.500 737 202.500 748V885.500H193.500V752Q192 744.500 177 744.500M36.500 885.500H45.500V752Q47 744.500 63 744.500" />
        <path d="M51.500 745V816.500H99.500V809.500H139.500V816.500H187.500V745M51.500 809.500H85.500V816.500M187.500 809.500H153.500V816.500" />
        <path d="M60.500 787.500H78.500V794.500H60.500ZM160.500 787.500H177.500V794.500H160.500Z" />
        <path d="M27 832.500H37M27 854.500H46M36.500 833L27.500 842V853L36.500 862M45.500 830Q58.500 836 58.500 847Q58 856 46 863M37.500 834V852M46.500 834V852M30 834L38 838" />
        <path d="M203 832.500H213M195 854.500H213M202.500 833L213.500 840V851L202.500 862M193.500 830L182.500 842V851L193.500 862M192.500 834V852M200.500 836V852M210 834L198 838" />
        <circle cx="253" cy="1000" r="33" />
        <rect x="275.500" y="630.500" width="1232" height="265" />
        {[0, 1, 2, 3].map((i) => <Socket key={i} dx={i * PITCH} />)}
        <Moon x={300.5} cap={293} far={277.5} near={287.5} />
        <Moon x={317.5} cap={333} far={346.5} near={333} />
        <Moon x={1466} cap={1450} far={1437.5} near={1451} />
        <Moon x={1482.5} cap={1491} far={1507} near={1497.5} />
        <g transform="translate(-1 0)">
          <Moon x={1538} cap={1532} far={1516.5} near={1523} top={721.5} bottom={774.5} />
          <Moon x={1551} cap={1563} far={1575.5} near={1568} top={721.5} bottom={774.5} />
          <Moon x={1763} cap={1751} far={1739.5} near={1746} top={721.5} bottom={774.5} />
          <Moon x={1776.5} cap={1780} far={1798} near={1792} top={721.5} bottom={774.5} />
          <path d="M1802 732Q1808 748 1802 764M1509.500 738V758M1511 738V758" />
          <rect x="1512.500" y="630.500" width="289" height="265" rx="5" />
          <path d="M1612.500 631V675.500H1585.500V756.500H1729.500V675.500H1701.500V631M1592.500 676L1595.500 737.500V756.500M1723.500 676L1719.500 737.500V756.500" />
          {tooth.map((x) => (
            <path key={x} d={`M${x - 10.5} 737.500H${x + 0.5}L${x + 2.5} 715L${x + 6} 712.500M${x + 8} 713L${x + 11.5} 737.500M${x + 0.5} 737V756M${x + 11.5} 737V756`} />
          ))}
          <path d="M1707.500 737.500H1719.500" />
          <circle cx="1646" cy="822" r="4.500" />
          <circle cx="1669" cy="878" r="4.500" />
        </g>
        <g transform="translate(-2 0)">
          <path d="M1917.500 715V660L1918.500 604Q1919 595.500 1925 595.500H1970Q1976.500 596 1976.500 604L1978.500 680V715" />
          <rect x="1866.500" y="715.500" width="161" height="102" />
          {[1892.5, 1928, 1966.5, 2003].map((x) => <circle key={x} cx={x} cy="781" r="7.500" />)}
          <circle cx="1870" cy="831" r="14" />
          <circle cx="2025" cy="831" r="14" />
          <path d="M2093.500 944.500V644Q2094 630.500 2107 630.500H2281L2290 638M2093.500 705.500H2290M2093.500 928.500H2290M2093.500 944.500H2290" />
          <path d="M2165.500 797.500H2220.500V803.500H2165.500ZM2159.500 928.500V944.500M2225.500 928.500V944.500M2159.500 940.500H2225.500M2165.500 940.500V929.500H2220.500V940.500" />
          <path d="M2145 944.500L2153.500 952.500H2233.500L2241 944.500" />
          <path d="M2093 821.500Q2073 824 2072.500 845V890Q2073 912 2093 915.500M2093 830Q2082 832 2081.500 845V890Q2082 905 2093 906.500M2088.500 840.500H2093.500V895.500H2088.500Z" />
        </g>
      </g>
    </g>
    <g fontFamily="Liberation Mono, monospace" fontSize="28" fill="#f4f4f4" textAnchor="middle">
      {labels.map(([t, x, y]) => (
        <text key={t} x={x} y={y + 9} transform={`rotate(180 ${x} ${y})`}>{t}</text>
      ))}
    </g>
    <g fontFamily="Liberation Mono, monospace" fontSize="16" fill="#e8a040">
      <text x="908" y="408">J</text>
      <path d="M925 397V411M919 400L931 408M931 400L919 408M919 404H931M921 396L929 412M929 396L921 412" stroke="#e8a040" strokeWidth="1.500" />
    </g>
  </svg>
);

/* ---------- command + status ---------- */

const CommandArea = styled.div`
  flex: none;
  display: flex;
  height: 42px;
  margin-right: 5px;
  padding: 6px 16px 9px 0;
  border-bottom: 1px solid #808080;
  border-top: 1px solid #fff;
`;
const CommandTools = styled.div`
  display: flex;
  flex-direction: column;
  justify-content: space-between;
  width: 17px;
`;
const TinyButton = styled.button`
  display: grid;
  place-items: center;
  width: 17px;
  height: 12px;
  padding: 0;
  border: 0;
  background: none;
`;
const CommandLabel = styled.label`
  flex: 1;
  display: flex;
  padding: 1px 3px;
  background: #fff;
  border: 1px solid #606060;
  line-height: 14px;
`;
const CommandInput = styled.input`
  flex: 1;
  height: 14px;
  padding: 0 2px;
  border: 0;
  outline: 0;
  background: none;
`;
const StatusBar = styled.footer`
  flex: none;
  display: flex;
  height: 20px;
  border-top: 1px solid #808080;
  border-bottom: 1px solid #fff;
  line-height: 18px;
`;
const StatusCell = styled.span<{ $w?: number; $bg?: string }>`
  ${(p) => (p.$w ? `flex: none; width: ${p.$w}px; text-align: center;` : "flex: 1; padding-left: 1px;")}
  background: ${(p) => p.$bg ?? "transparent"};
  border-left: 1px solid #808080;
  border-right: 1px solid #fff;
  white-space: nowrap;
`;
const StatusButton = styled.button`
  flex: none;
  width: 15px;
  height: 17px;
  margin: 1px 1px 0 2px;
  padding: 0;
  border: 1px solid #444;
  border-top-color: #fff;
  border-left-color: #fff;
  outline: 1px solid #555;
  background: #efefef;
  line-height: 14px;
`;
const Taskbar = styled.div`
  flex: none;
  height: 4px;
  background: linear-gradient(90deg, #f2f2f2 0 76%, #cfe3f3 90%);
`;

/* ---------- side panels ---------- */

const Side = styled.aside`
  flex: none;
  width: 238px;
  display: flex;
  flex-direction: column;
  gap: 6px;
  border-left: 1px solid #909090;
`;
const Panel = styled.section<{ $h?: number }>`
  ${(p) => (p.$h ? `height: ${p.$h}px;` : "flex: 1;")}
  border-left: 1px solid #808080;
`;
const PanelHead = styled.h2`
  display: flex;
  align-items: center;
  height: 18px;
  margin: 0;
  padding: 0 10px 4px 3px;
  background: linear-gradient(#e9e9e9, #b9b9b9);
  border-top: 1px solid #999;
  font-size: 11px;
  font-weight: 400;
  color: #222;
  svg { margin: 4px 0 0 auto; }
`;
const HeadGrip = styled.span`
  width: 3px;
  height: 8px;
  margin-right: 4px;
  background: linear-gradient(#0a78d6 0 3px, transparent 3px 5px, #0a78d6 5px);
`;
const Check = styled.input.attrs({ type: "checkbox" })`
  appearance: none;
  flex: none;
  width: 13px;
  height: 13px;
  background: #f3f3f3;
  border: 1px solid #5f5f5f;
  border-radius: 3px;
  display: inline-grid;
  place-items: center;
  &:disabled { border-color: #c4c4c4; background: #f7f7f7; }
  &:checked { background: #0a5fb8; border-color: #0a5fb8; }
  &:checked::after {
    content: "";
    width: 6px;
    height: 3px;
    border: solid #fff;
    border-width: 0 0 1px 1px;
    transform: rotate(-45deg) translate(1px, -1px);
  }
`;
const CheckLabel = styled.label<{ $off?: boolean }>`
  display: flex;
  align-items: center;
  gap: 3px;
  height: 22px;
  white-space: nowrap;
  color: ${(p) => (p.$off ? "#8c8c8c" : "#000")};
`;
const SelectBox = styled.span<{ $w: number }>`
  display: inline-grid;
  align-items: center;
  width: ${(p) => p.$w}px;
  height: 21px;
  select, svg { grid-area: 1 / 1; }
  svg { justify-self: end; margin-right: 4px; pointer-events: none; }
`;
const Select = styled.select`
  appearance: none;
  width: 100%;
  height: 21px;
  padding: 0 3px;
  background: #fdfdfd;
  border: 1px solid #cfcfcf;
  border-bottom-color: #b0b0b0;
  border-radius: 2px;
`;
const Combo = ({ w, label, value }: { w: number; label: string; value: string }) => (
  <SelectBox $w={w}>
    <Select aria-label={label} defaultValue={value}>
      <option>{value}</option>
    </Select>
    <svg width="10" height="6" viewBox="0 0 10 6"><path d="M1 1l4 4 4-4" fill="none" stroke="#555" /></svg>
  </SelectBox>
);
const ViewsRow = styled.div`
  display: flex;
  align-items: center;
  justify-content: space-between;
  width: 199px;
  margin-top: 12px;
`;
const LayerTable = styled.table<{ $list?: boolean }>`
  table-layout: fixed;
  width: 199px;
  border-collapse: collapse;
  line-height: 16px;
  ${(p) => p.$list && css`margin-left: 1px;`}
  tr { height: 22px; }
  th, td { padding: 0; font-weight: 400; text-align: center; white-space: nowrap; }
  th:first-child { text-align: left; }
  td input, td button { vertical-align: middle; }
`;
const PlanHead = styled.th`
  && { text-align: right; padding-right: 10px; }
`;
const ListArea = styled.div`
  margin-top: 5px;
  border-top: 1px solid #606060;
`;
const Swatch = styled.button<{ $c: string }>`
  width: 12px;
  height: 12px;
  padding: 0;
  border: 1px solid #6a6a6a;
  background: ${(p) => p.$c};
  box-shadow: inset 1px 1px #a8a8a8, inset -1px -1px #e0e0e0, inset 2px 2px #fff;
`;
const OptionsBody = styled.div`
  padding: 12px 0 0 8px;
  border-top: 1px solid #606060;
  margin-top: 1px;
`;
const FieldHead = styled.div`
  margin-top: 13px;
  line-height: 22px;
`;
const Field = styled.label`
  display: grid;
  grid-template-columns: 42px auto;
  column-gap: 21px;
  justify-content: start;
  align-items: center;
  height: 22px;
  > span:first-child { text-align: right; }
`;
const FindBody = styled.div`
  padding: 6px 0 0 7px;
`;
const Group = styled.fieldset`
  width: 189px;
  margin: 0 0 4px;
  padding: 2px 6px 0;
  border: 1px solid #d6d6d6;
  legend { padding: 0 3px; line-height: 16px; }
`;
const ButtonRow = styled.div`
  display: flex;
  gap: 13px;
  margin: 2px 0 3px;
`;
const PushButton = styled.button<{ $w: number; $h?: number; $on?: boolean }>`
  width: ${(p) => p.$w}px;
  height: ${(p) => p.$h ?? 20}px;
  padding: 0;
  background: #fdfdfd;
  border: 1px solid ${(p) => (p.$on ? "#0a68c4" : "#c9c9c9")};
  border-radius: 4px;
  line-height: 12px;
  white-space: nowrap;
`;
const FilterGrid = styled.div`
  display: grid;
  grid-template-columns: 84px auto;
`;
const NameRow = styled.div`
  display: flex;
  align-items: center;
  gap: 5px;
  height: 24px;
`;
const NameLabel = styled.label`
  display: flex;
  align-items: center;
  gap: 8px;
`;
const NameInput = styled.input`
  width: 106px;
  height: 20px;
  background: #fff;
  border: 1px solid #606060;
`;
const QueryRow = styled.div`
  padding: 15px 0 0 1px;
`;

const PanelTitle = ({ children }: { children: string }) => (
  <PanelHead>
    <HeadGrip />
    {children}
    <svg width="8" height="9" viewBox="0 0 8 9"><path d="M2 1h4v4H2zM5 1v4M1 5h6M4 5v4" fill="none" stroke="#000" /></svg>
  </PanelHead>
);

const green = "#00a000";
const crimson = "#dc0018";
const layers: [string, string[], boolean][] = [
  ["Top", [green, green, green, green, "#fff"], true],
  ["02G01p", ["#000", "#000", "#000", "#000", "#000"], false],
  ["03V01p", ["#000", "#000", "#000", "#000", "#000"], false],
  ["Bottom", [crimson, crimson, "#ff0000", crimson, "#fff"], true],
  ["All", ["#000", "", "", "", "#000"], false],
];
const kinds = ["Etch", "Via", "Pin", "Drc", "All"];
const filters: [string, boolean?][] = [
  ["Groups"], ["Shapes"], ["Comps", true], ["Voids/Cavities", true], ["Symbols"], ["Cline segs"],
  ["Functions", true], ["Other segs"], ["Nets", true], ["Figures"], ["Pins"], ["DRC errors", true],
  ["Vias"], ["Text"], ["Clines"], ["Ratsnests", true], ["Lines"], ["Rat Ts"],
];

const Col = styled.col<{ $w: number }>`
  width: ${(p) => p.$w}px;
`;
const Columns = () => (
  <colgroup>
    <Col $w={40} />
    <Col $w={33} />
    {[0, 1, 2, 3, 4, 5].map((i) => <Col key={i} $w={21} />)}
  </colgroup>
);

const SidePanels = () => (
  <Side>
    <Panel $h={310}>
      <PanelTitle>Visibility</PanelTitle>
      <ViewsRow><span>Views:</span><Combo w={157} label="Views" value="" /></ViewsRow>
      <LayerTable>
        <Columns />
        <thead>
          <tr>
            <th><u>Layer</u></th>
            <PlanHead colSpan={2}><u>Plan</u></PlanHead>
            {kinds.map((k) => <th key={k}><u>{k}</u></th>)}
          </tr>
        </thead>
        <tbody>
          <tr>
            <th colSpan={2}>Conductors</th>
            {["Plan", ...kinds].map((k) => <td key={k}><Check aria-label={`Conductors ${k}`} /></td>)}
          </tr>
          <tr>
            <th>Planes</th>
            <td><Check aria-label="Planes" defaultChecked /></td>
            <td />
            {kinds.map((k) => <td key={k}><Check aria-label={`Planes ${k}`} defaultChecked /></td>)}
          </tr>
        </tbody>
      </LayerTable>
      <ListArea>
        <LayerTable $list>
          <Columns />
          <tbody>
            {layers.map(([name, colors, on]) => (
              <tr key={name}>
                <th colSpan={2}>{name}</th>
                {colors.map((c, i) => <td key={i}>{c && <Swatch $c={c} aria-label={`${name} color ${i + 1}`} />}</td>)}
                <td><Check aria-label={`${name} all`} defaultChecked={on} /></td>
              </tr>
            ))}
          </tbody>
        </LayerTable>
      </ListArea>
    </Panel>
    <Panel $h={335}>
      <PanelTitle>Options</PanelTitle>
      <OptionsBody>
        <CheckLabel><Check />Ripup etch</CheckLabel>
        <CheckLabel><Check defaultChecked />Slide etch</CheckLabel>
        <CheckLabel><Check />Stretch etch</CheckLabel>
        <FieldHead>Rotation:</FieldHead>
        <Field><span>Type:</span><Combo w={94} label="Type" value="Incremental" /></Field>
        <Field><span>Angle:</span><Combo w={82} label="Angle" value="135.00" /></Field>
        <Field><span>Point:</span><Combo w={108} label="Point" value="Body Center" /></Field>
      </OptionsBody>
    </Panel>
    <Panel>
      <PanelTitle>Find</PanelTitle>
      <FindBody>
        <Group>
          <legend>Design Object Find Filter</legend>
          <ButtonRow>
            <PushButton $w={43} $h={15} $on>All On</PushButton>
            <PushButton $w={47} $h={15}>All Off</PushButton>
          </ButtonRow>
          <FilterGrid>
            {filters.map(([name, off]) => (
              <CheckLabel key={name} $off={off}>
                <Check disabled={off} defaultChecked={name === "Symbols"} />
                {name}
              </CheckLabel>
            ))}
          </FilterGrid>
        </Group>
        <Group>
          <legend>Find By Name</legend>
          <NameRow>
            <Combo w={122} label="Object type" value="Symbol (or Pin)" />
            <Combo w={52} label="Match by" value="Name" />
          </NameRow>
          <NameRow>
            <NameLabel>&gt;<NameInput aria-label="Name" /></NameLabel>
            <PushButton $w={49}>More...</PushButton>
          </NameRow>
        </Group>
        <QueryRow><PushButton $w={89}>Find by Query...</PushButton></QueryRow>
      </FindBody>
    </Panel>
  </Side>
);

/* ---------- popup menus ---------- */

const Popup = styled.div<{ $x: number; $y: number; $w: number }>`
  position: absolute;
  left: ${(p) => p.$x}px;
  top: ${(p) => p.$y}px;
  width: ${(p) => p.$w}px;
  padding: 2px 2px 2px 24px;
  border: 1px solid #a0a0a0;
  background: linear-gradient(90deg, #f0f0f0 0, #b8b8b8 22px, #fff 23px);
  font-family: ${ui};
  font-size: 15px;
`;
const Item = styled.button<{ $hot?: boolean }>`
  display: flex;
  justify-content: space-between;
  align-items: center;
  width: 100%;
  height: 21px;
  padding: 0 14px 2px 5px;
  border: 0;
  background: ${(p) => (p.$hot ? "#f6d8d8" : "#fff")};
  color: #444;
  line-height: 19px;
  white-space: nowrap;
  &:disabled { background: #efefef; color: #c6c6c6; }
  svg { margin-right: -5px; }
`;
const Rule = styled.hr`
  height: 1px;
  margin: 2px 2px 3px;
  border: 0;
  background: #000;
`;
const SubArrow = ({ color = "#000" }) => (
  <svg width="5" height="10" viewBox="0 0 5 10"><path d="M0 0l5 5-5 5z" fill={color} /></svg>
);

type Entry = { t: string; k?: string; sub?: boolean; off?: boolean; hot?: boolean };
const mainItems: Entry[] = [
  { t: "Done", k: "d" }, { t: "Oops", k: "u" }, { t: "Cancel", k: "Esc" }, { t: "Persistent select", sub: true },
  { t: "Select by Polygon" }, { t: "Select by Lasso" }, { t: "Select on Path" }, { t: "Temp Group" },
  { t: "Reject", k: "9" }, { t: "Alt Symbol", off: true }, { t: "Mirror Geometry", off: true },
  { t: "Mirror", k: "r", off: true }, { t: "Set Rotate Angle" }, { t: "Rotate", off: true },
  { t: "Options", sub: true }, { t: "Snap pick to", sub: true, hot: true },
];
const snapItems: Entry[][] = [
  [{ t: "Persistent snap", sub: true }],
  [{ t: "Segment Vertex" }, { t: "Segment Midpoint" }, { t: "Segment" }, { t: "Intersection" }],
  [{ t: "Shape Center" }, { t: "Arc/Circle Center" }, { t: "Symbol Origin" }, { t: "Symbol Center" }],
  [{ t: "Pin", hot: true }, { t: "Via" }, { t: "Figure" }],
  [{ t: "Pad Edge Vertex" }, { t: "Pad Edge Midpoint" }, { t: "Pad Edge" }],
  [{ t: "Off-grid Location" }, { t: "Grid Point" }],
  [{ t: "Snap Offset (0.00 0.00)..." }],
];
const renderItem = ({ t, k, sub, off, hot }: Entry) => (
  <Item key={t} disabled={off} $hot={hot}>
    <span>{t}</span>
    {k && <span>{k}</span>}
    {sub && <SubArrow color={hot ? "#fff" : "#000"} />}
  </Item>
);

/* ---------- annotations ---------- */

const Overlay = styled.svg`
  position: absolute;
  left: 0;
  top: 0;
  width: 100%;
  pointer-events: none;
`;
const Arrow = ({ from, to, w, head, fill = red }: { from: number[]; to: number[]; w: number; head: number; fill?: string }) => {
  const [x1, y1] = from;
  const [x2, y2] = to;
  const len = Math.hypot(x2 - x1, y2 - y1);
  const a = (Math.atan2(y2 - y1, x2 - x1) * 180) / Math.PI;
  const n = len - head;
  return (
    <path
      transform={`translate(${x1} ${y1}) rotate(${a})`}
      d={`M0 0L${n + 4} ${-w / 2}L${n} ${-w}L${len} 0L${n} ${w}L${n + 4} ${w / 2}Z`}
      fill={fill}
    />
  );
};
const rings = [
  [126, 25, 25, 23], [2413, 594, 111, 41], [2342, 857, 44, 19], [987, 468, 31, 35], [1078, 804, 91, 20], [1284, 1007, 113, 29],
];
const digits: [string, number, number][] = [
  ["1", 62, 39], ["2", 2410, 623], ["3", 2375, 832], ["4", 998, 421], ["5", 1094, 772], ["6", 1338, 972],
];

const Annotations = () => (
  <Overlay viewBox="0 0 2532 1360" aria-hidden="true">
    <defs>
      <linearGradient id="fade"><stop offset="0" stopColor={red} stopOpacity="0.200" /><stop offset=".06" stopColor={red} /></linearGradient>
      <linearGradient id="blue" x1="0" y1="0" x2="0" y2="1"><stop offset="0" stopColor="#b9c8ea" /><stop offset="1" stopColor="#7c93c8" /></linearGradient>
    </defs>
    <Arrow from={[216, 70]} to={[2250, 538]} w={9} head={22} fill="url(#fade)" />
    <Arrow from={[2258, 854]} to={[1037, 448]} w={10} head={18} fill="url(#fade)" />
    <Arrow from={[1005, 519]} to={[1015, 722]} w={10} head={18} />
    <Arrow from={[1180, 832]} to={[1189, 970]} w={10} head={17} />
    <Arrow from={[2386, 670]} to={[2375, 775]} w={10} head={17} />
    <g fill="none" stroke={red} strokeWidth="6">
      {rings.map(([cx, cy, rx, ry]) => <ellipse key={cx} cx={cx} cy={cy} rx={rx} ry={ry} />)}
    </g>
    <g fill={red} fontFamily="Open Sans, Noto Sans, sans-serif" fontSize="33" textAnchor="middle">
      {digits.map(([t, x, y]) => <text key={t} x={x} y={y}>{t}</text>)}
    </g>
  </Overlay>
);
const Watermark = styled.div`
  position: absolute;
  right: 17px;
  bottom: 7px;
  font-family: "Noto Sans CJK SC", sans-serif;
  font-size: 20px;
  line-height: 24px;
  color: #b8b8b8;
  text-shadow: 1px 1px #777, -1px -1px #f4f4f4;
  white-space: nowrap;
  pointer-events: none;
`;

export default function App() {
  return (
    <Page>
      <GlobalStyle />
      <Header>
        <MenuBar>
          {menus.map(([name, i]) => (
            <MenuButton key={name}>
              {i < 0 ? name : <>{name.slice(0, i)}<u>{name[i]}</u>{name.slice(i + 1)}</>}
            </MenuButton>
          ))}
          <Brand>cadence</Brand>
        </MenuBar>
        <Toolbar groups={rowOne} />
        <Toolbar groups={rowTwo} />
      </Header>
      <Body>
        <Work>
          <Stage><Drawing /></Stage>
          <CommandArea>
            <CommandTools>
              <TinyButton aria-label="Close command window"><svg width="7" height="7"><path d="M1 1l5 5M6 1L1 6" stroke="#000" strokeWidth="1.500" /></svg></TinyButton>
              <TinyButton aria-label="Pin command window"><svg width="8" height="8"><path d="M1 6V4h6v2M4 1v6" stroke="#1a6fc4" fill="none" /></svg></TinyButton>
            </CommandTools>
            <CommandLabel>Command &gt;<CommandInput /></CommandLabel>
          </CommandArea>
        </Work>
        <SidePanels />
      </Body>
      <StatusBar>
        <StatusCell>move</StatusCell>
        <StatusCell $w={52} $bg="#00ff00" />
        <StatusCell $w={132} />
        <StatusCell $w={123}>2023-11-14-Dxf</StatusCell>
        <StatusCell $w={134}>23510.51, 7319.42</StatusCell>
        <StatusButton>P</StatusButton>
        <StatusButton>A</StatusButton>
        <StatusCell $w={102} />
        <StatusCell $w={43} />
        <StatusCell $w={123}>General edit</StatusCell>
        <StatusCell $w={73}>Off</StatusCell>
        <StatusCell $w={54} $bg="#ff0000">DFC</StatusCell>
        <StatusCell $w={17} />
      </StatusBar>
      <Taskbar />
      <Popup $x={993} $y={472} $w={180}>{mainItems.map(renderItem)}</Popup>
      <Popup $x={1167} $y={787} $w={219}>
        {snapItems.map((group, i) => (
          <React.Fragment key={group[0].t}>
            {i > 0 && <Rule />}
            {group.map(renderItem)}
          </React.Fragment>
        ))}
      </Popup>
      <Watermark>CSDN @城西萝卜暴打城南西瓜</Watermark>
      <Annotations />
    </Page>
  );
}
